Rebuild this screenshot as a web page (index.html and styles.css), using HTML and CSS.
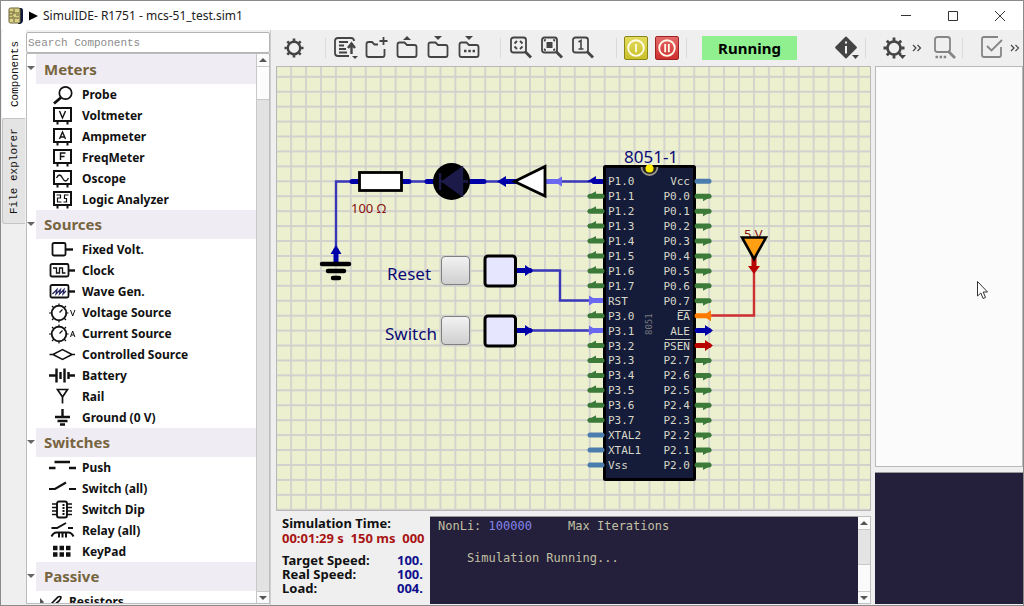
FILE: index.html
```html
<!DOCTYPE html>
<html lang="en">
<head>
<meta charset="utf-8">
<title>SimulIDE- R1751 - mcs-51_test.sim1</title>
<link rel="stylesheet" href="styles.css">
</head>
<body>
<div class="window">
  <header class="titlebar">
    <svg class="app-icon" width="16" height="18" viewBox="0 0 16 18"><path d="M10 1h3q2 0 2 3v9q0 3-3 4h-2z" fill="#111a3c"/><rect x="1" y="1" width="11" height="15" rx="1.500" fill="#d9cf86" stroke="#6a6236"/><path d="M1 5h4v3H1M1 11h4v-2M6 2v4h5M6 15v-4h5M8 8h3" fill="none" stroke="#6a6236"/></svg>
    <svg width="9" height="10" viewBox="0 0 9 10"><path d="M0 0.500L9 5L0 9.500z" fill="#000"/></svg>
    <h1 class="title">SimulIDE- R1751 - mcs-51_test.sim1</h1>
    <div class="window-buttons">
      <button aria-label="Minimize"><svg width="12" height="12" viewBox="0 0 12 12"><path d="M1 5.500h10"/></svg></button>
      <button aria-label="Maximize"><svg width="12" height="12" viewBox="0 0 12 12"><path d="M1.500 1.500h9v9h-9z"/></svg></button>
      <button aria-label="Close"><svg width="12" height="12" viewBox="0 0 12 12"><path d="M1 1l10 10M11 1L1 11"/></svg></button>
    </div>
  </header>

  <div class="workspace">
    <nav class="side-tabs">
      <button class="side-tab active">Components</button>
      <button class="side-tab">File explorer</button>
    </nav>

    <aside class="sidebar">
      <input class="search" type="text" placeholder="Search Components" aria-label="Search Components">
      <div class="tree-frame">
        <div class="tree">
          <section>
            <h2 class="category"><span>Meters</span></h2>
            <ul class="items">
              <li><svg class="ico" viewBox="0 0 28 20"><circle cx="17.500" cy="8" r="6.200" stroke-width="1.700"/><path d="M13 12.500L6 18.500" stroke-width="2.800"/></svg>Probe</li>
              <li><svg class="ico" viewBox="0 0 28 20"><path d="M6 2h17v13H6zM9.500 15v3.500M19.500 15v3.500"/><path d="M11.500 5l3 7 3-7" stroke-width="1.400"/></svg>Voltmeter</li>
              <li><svg class="ico" viewBox="0 0 28 20"><path d="M6 2h17v13H6zM9.500 15v3.500M19.500 15v3.500"/><path d="M11.500 12l3-7 3 7M12.500 10h4" stroke-width="1.400"/></svg>Ampmeter</li>
              <li><svg class="ico" viewBox="0 0 28 20"><path d="M6 2h17v13H6zM9.500 15v3.500M19.500 15v3.500"/><path d="M12.500 12V5h5M12.500 8.500h4" stroke-width="1.400"/></svg>FreqMeter</li>
              <li><svg class="ico" viewBox="0 0 28 20"><path d="M6 2h17v13H6zM9.500 15v3.500M19.500 15v3.500"/><path d="M8.500 9q3-6 6 0t6 0" stroke-width="1.300"/></svg>Oscope</li>
              <li><svg class="ico" viewBox="0 0 28 20"><path d="M6 2h17v13H6zM9.500 15v3.500M19.500 15v3.500"/><path d="M8.500 5h4v3h-3v4h4M15.500 12h3v-3.500h-2V5h4" stroke-width="1.200"/></svg>Logic Analyzer</li>
            </ul>
          </section>
          <section>
            <h2 class="category"><span>Sources</span></h2>
            <ul class="items">
              <li><svg class="ico" viewBox="0 0 28 20"><rect x="4.500" y="3" width="13" height="12.500" rx="1.500" stroke-width="1.800"/><path d="M18 9.500h7" stroke-width="2.400"/></svg>Fixed Volt.</li>
              <li><svg class="ico" viewBox="0 0 28 20"><rect x="2.500" y="3" width="18" height="12.500" rx="1.500" stroke-width="1.800"/><path d="M21 9.500h6" stroke-width="2.400"/><path d="M5 7h3.500v5h3V7h3v5h3" stroke-width="1.300"/></svg>Clock</li>
              <li><svg class="ico" viewBox="0 0 28 20"><rect x="2.500" y="3" width="18" height="12.500" rx="1.500" stroke-width="1.800"/><path d="M21 9.500h6" stroke-width="2.400"/><path d="M4.500 12l4.500-4.500-1 4.500 4.500-4.500-1 4.500 4.500-4.500-1 4.500 3-3" stroke="#22235c" stroke-width="1.200"/></svg>Wave Gen.</li>
              <li><svg class="ico" viewBox="0 0 28 20"><circle cx="11" cy="10" r="7.300" stroke-width="1.800"/><path d="M11 0.500v3M11 16.500v3M1 10h3M17.500 10h3M4 3l2 2M18 3l-2 2M4 17l2-2M18 17l-2-2M11.500 9.500l3-3" stroke-width="1.200"/><path d="M22.500 7l2.200 6 2.200-6" stroke-width="1"/></svg>Voltage Source</li>
              <li><svg class="ico" viewBox="0 0 28 20"><circle cx="11" cy="10" r="7.300" stroke-width="1.800"/><path d="M11 0.500v3M11 16.500v3M1 10h3M17.500 10h3M4 3l2 2M18 3l-2 2M4 17l2-2M18 17l-2-2M11.500 9.500l3-3" stroke-width="1.200"/><path d="M22.500 13l2.200-6 2.200 6M23.500 11h2.500" stroke-width="1"/></svg>Current Source</li>
              <li><svg class="ico" viewBox="0 0 28 20"><path d="M1.500 9.500H5L14.500 4.500L24 9.500h3M24 9.500L14.500 14.500L5 9.500" stroke-width="1.500"/></svg>Controlled Source</li>
              <li><svg class="ico" viewBox="0 0 28 20"><path d="M1 9.500h7M20 9.500h7" stroke-width="2.400"/><path d="M8.500 2.500v14M12.500 6v7M16.500 2.500v14M20.500 6v7" stroke-width="2.400"/></svg>Battery</li>
              <li><svg class="ico" viewBox="0 0 28 20"><path d="M9.500 2.500h10L14.500 10zM14.500 10v6.500" stroke-width="1.700"/></svg>Rail</li>
              <li><svg class="ico" viewBox="0 0 28 20"><path d="M14.500 1v8" stroke-width="2.400"/><path d="M7 9h15M9.500 13h10M12 16.500h5" stroke-width="2.600"/></svg>Ground (0 V)</li>
            </ul>
          </section>
          <section>
            <h2 class="category"><span>Switches</span></h2>
            <ul class="items">
              <li><svg class="ico" viewBox="0 0 28 20"><path d="M1 10h6.500M21 10h7M6.500 4h15.500" stroke-width="2.400"/></svg>Push</li>
              <li><svg class="ico" viewBox="0 0 28 20"><path d="M1 10h6L18 3.500M21 10h7" stroke-width="2.200"/></svg>Switch (all)</li>
              <li><svg class="ico" viewBox="0 0 28 20"><path d="M4 4h6M4 7.500h6M4 11h6M4 14.500h6M18 4h6M18 7.500h6M18 11h6M18 14.500h6" stroke-width="1.700"/><rect x="9" y="1.500" width="10" height="16" rx="2" stroke-width="1.900"/><path d="M15.500 4v11.500" stroke-dasharray="2 1" stroke-width="2"/></svg>Switch Dip</li>
              <li><svg class="ico" viewBox="0 0 28 20"><path d="M3.500 7H9L18 2M20 7h5" stroke-width="2"/><path d="M3.500 15.500q2-4 5-4h12q3 0 5 4M11 11.500v5M14.500 11.500v5M18 11.500v5" stroke-width="2"/></svg>Relay (all)</li>
              <li><svg class="ico" viewBox="0 0 28 20"><path d="M5 6h17.500M5 12.500h17.500" stroke-width="4.500" stroke-dasharray="4.500 2"/></svg>KeyPad</li>
            </ul>
          </section>
          <section>
            <h2 class="category"><span>Passive</span></h2>
            <ul class="items nested">
              <li><svg class="ico" viewBox="0 0 28 20"><path d="M1 6l4 4-4 4z" fill="#555" stroke="none"/><path d="M12 15q-1-2 1-4l6-6q2-1 3 0 0 2-2 4l-6 5q-2 1-3 1l-2 2" stroke-width="1.700"/></svg>Resistors</li>
            </ul>
          </section>
        </div>
        <div class="scrollbar tree-scroll">
          <span class="arrow up"></span>
          <span class="thumb"></span>
          <span class="arrow down"></span>
        </div>
      </div>
    </aside>

    <main class="center">
      <div class="toolbar">
        <button aria-label="Settings"><svg viewBox="0 0 24 24"><circle cx="12" cy="12" r="6.200" stroke-width="2.400"/><path d="M12 2.500v3M12 18.500v3M2.500 12h3M18.500 12h3M5.300 5.300l2 2M16.700 16.700l2 2M5.300 18.700l2-2M16.700 7.300l2-2" stroke-width="2.600"/></svg></button>
        <span class="sep"></span>
        <button aria-label="Recent circuits"><svg viewBox="0 0 24 24"><path d="M21 5q0-3-3-3H5Q2 2 2 5v12q0 3 3 3h11"/><path d="M6 6h9M6 9.500h5M6 13h7M6 16.500h8" stroke-width="2"/><path d="M18.500 18V9M15 12L18.500 7.500l3.500 4.500" stroke-width="2.400"/><path d="M19 20h6l-3 3z" fill="#444" stroke="none"/></svg></button>
        <button aria-label="New circuit"><svg viewBox="0 0 24 24"><path d="M14 8.500H10.500L8 6H4.500Q2.500 6 2.500 8v11q0 2 2 2h14q2 0 2-2v-6M19.500 1v8M15.500 5h8"/></svg></button>
        <button aria-label="Open circuit"><svg viewBox="0 0 24 24"><path d="M2.500 19V8.500q0-2 2-2h5L12 9h7.500q2 0 2 2v8q0 2-2 2h-15q-2 0-2-2z"/><path d="M8 4l4-4 4 4z" fill="#444" stroke="none"/></svg></button>
        <button aria-label="Save circuit"><svg viewBox="0 0 24 24"><path d="M2.500 19V8.500q0-2 2-2h5L12 9h7.500q2 0 2 2v8q0 2-2 2h-15q-2 0-2-2z"/><path d="M8 0h8l-4 4z" fill="#444" stroke="none"/></svg></button>
        <button aria-label="Save circuit as"><svg viewBox="0 0 24 24"><path d="M2.500 19V8.500q0-2 2-2h5L12 9h7.500q2 0 2 2v8q0 2-2 2h-15q-2 0-2-2z"/><path d="M8 0h8l-4 4z" fill="#444" stroke="none"/><path d="M7 15h11" stroke-width="2.500" stroke-dasharray="2.500 1.800"/></svg></button>
        <span class="sep"></span>
        <button class="zoom-first" aria-label="Zoom to fit"><svg viewBox="0 0 24 24"><rect x="2" y="1.500" width="15" height="15" rx="2.500"/><path d="M16 15.500l6 6" stroke-width="2.800"/><path d="M8 5L5.500 7.500M11 5L13.500 7.500M5.500 10.500L8 13M13.500 10.500L11 13"/></svg></button>
        <button aria-label="Zoom to selection"><svg viewBox="0 0 24 24"><rect x="2" y="1.500" width="15" height="15" rx="2.500"/><path d="M16 15.500l6 6" stroke-width="2.800"/><rect x="6.500" y="6" width="6" height="6" fill="#444" stroke="none"/><path d="M4.500 5.500V4H6M13 4h1.500V5.500M4.500 12.500v1.500H6M14.500 12.500v1.500H13" stroke-width="1.300"/></svg></button>
        <button aria-label="Zoom one to one"><svg viewBox="0 0 24 24"><rect x="2" y="1.500" width="15" height="15" rx="2.500"/><path d="M16 15.500l6 6" stroke-width="2.800"/><path d="M7.500 6l2.500-1.500v8.500M7.500 13h5" stroke-width="1.600"/></svg></button>
        <span class="sep wide"></span>
        <button class="run power" aria-label="Power circuit"><svg viewBox="0 0 24 24"><circle cx="12" cy="12" r="8.500"/><path d="M12 7.500v9"/></svg></button>
        <button class="run pause" aria-label="Pause simulation"><svg viewBox="0 0 24 24"><circle cx="12" cy="12" r="8.500"/><path d="M10 7.500v9M14 7.500v9"/></svg></button>
        <span class="sep narrow"></span>
        <output class="status">Running</output>
        <button class="info-btn" aria-label="Info"><svg viewBox="0 0 24 24"><path d="M12 1.500L22 11.500L12 21.500L2 11.500z" fill="#444" stroke-linejoin="round"/><path d="M12 10v7.500M12 5.500v2" stroke="#f4f4f4" stroke-width="2"/><path d="M18 19h7l-3.500 4z" fill="#444" stroke="none"/></svg></button>
        <span class="edge"></span>
      </div>

      <div class="canvas">
        <svg class="scene" width="100%" height="100%">
          <defs>
            <pattern id="grid" x="0" y="0" width="14.930" height="14.930" patternUnits="userSpaceOnUse" patternTransform="translate(335.900 181.300)">
              <path d="M0 0H14.930M0 14.930H14.930M0 0V14.930M14.930 0V14.930" stroke="#d1d1cd" stroke-width="1.800" fill="none"/>
            </pattern>
          </defs>
          <g transform="translate(-277 -67)">
            <rect x="277" y="67" width="4000" height="4000" fill="url(#grid)"/>
            <g class="wire">
              <path d="M336 248V181.500H352M402 181.500H436M480 181.500H514M554 181.500H590M528 270.500H560V300.500H590M528 330.500H590"/>
              <path class="hot" d="M711 315.500H754V268"/>
            </g>
            <g class="pin">
              <path d="M336 262V250M352 181.500H360M402 181.500H409M427 181.500H440M468 181.500H484M504 181.500H516M594 181.500H602M514 270.500H530M514 330.500H530"/>
              <path class="head" d="M336 245l5.500 9h-11zM497 181.500l9-5.500v11zM587 181.500l9-5.500v8zM533 270.500l-8-5.500v11zM533 330.500l-8-5.500v11z"/>
              <g class="input"><path d="M547 181.500H559M591 300.500H602M591 330.500H602"/><path class="head" d="M554 181.500l8-5v10zM597 300.500l-8-5v10zM597 330.500l-8-5v10z"/></g>
              <g class="high"><path d="M754 256V268"/><path class="head" d="M754 274l-6-8h12z"/></g>
            </g>
            <path d="M322 264H349M328 271H344M333 278H339" stroke="#000" stroke-width="4.500" stroke-linecap="round"/>
            <rect x="359.500" y="172.500" width="42" height="18" fill="#fff" stroke="#000" stroke-width="2.800"/>
            <circle cx="451.500" cy="181.500" r="18.500" fill="#000"/>
            <path d="M462 168V195L443 181.500zM440 173v17M440 181.500h28" fill="#1c1a48" stroke="#1c1a48" stroke-width="2.400"/>
            <path d="M545 166.500V196L514.500 181.500z" fill="#fff" stroke="#000" stroke-width="2.800"/>
            <rect x="485" y="256" width="30.500" height="30" rx="3" fill="#e6e6ff" stroke="#000" stroke-width="3"/>
            <rect x="485" y="316" width="30.500" height="30" rx="3" fill="#e6e6ff" stroke="#000" stroke-width="3"/>
            <text class="value" x="351" y="213">100 Ω</text>
            <text class="value" x="744" y="239">5 V</text>
            <path d="M742 237.500H766L754 259z" fill="#ffa014" stroke="#000" stroke-width="2.600"/>
            <text class="label" x="387" y="280">Reset</text>
            <text class="label" x="385" y="340">Switch</text>
            <text class="label" x="624" y="163">8051-1</text>
            <rect x="604.500" y="166.500" width="90" height="313" rx="1" fill="#141c3a" stroke="#000" stroke-width="3"/>
            <path d="M641.500 167a8 8 0 0 0 16 0" fill="#222" stroke="#9a968c" stroke-width="1.800"/>
            <circle cx="649.500" cy="168.500" r="4" fill="#ffee00"/>
            <g id="chip-pins"></g>
            <text class="chip-name" transform="translate(652 335) rotate(-90)">8051</text>
            <path d="M678 310.500H690.500M665 339.500H690.500" stroke="#c9c8bd" stroke-width="1"/>
          </g>
        </svg>
        <button class="push reset" aria-label="Reset"></button>
        <button class="push switch" aria-label="Switch"></button>
      </div>

      <div class="bottom">
        <section class="sim-info">
          <h3>Simulation Time:</h3>
          <p class="time">00:01:29 s  150 ms  000</p>
          <dl>
            <dt>Target Speed:</dt><dd>100.</dd>
            <dt>Real Speed:</dt><dd>100.</dd>
            <dt>Load:</dt><dd>004.</dd>
          </dl>
        </section>
        <div class="console">
          <p>NonLi: <b>100000</b>     Max Iterations</p>
          <p class="message">    Simulation Running...</p>
        </div>
        <div class="scrollbar console-scroll">
          <span class="arrow up"></span>
          <span class="thumb"></span>
          <span class="arrow down"></span>
        </div>
      </div>
    </main>

    <div class="editor">
      <div class="toolbar">
        <button aria-label="Editor settings"><svg viewBox="0 0 24 24"><circle cx="12" cy="12" r="6.500" stroke-width="2.600"/><path d="M12 1.500v4M12 18.500v4M1.500 12h4M18.500 12h4M4.800 4.800l2.500 2.500M17 17l2 2M4.800 19.200L7.300 16.700M16.700 7.300l2.500-2.500" stroke-width="2.800"/><path d="M17 19h7l-3.500 4z" fill="#444" stroke="none"/></svg></button>
        <button class="more" aria-label="More editor tools"><svg viewBox="0 0 10 8"><path d="M1 1l3 3-3 3M5.500 1l3 3-3 3" stroke-width="1.200"/></svg></button>
        <button class="dim find" aria-label="Find"><svg viewBox="0 0 24 24"><rect x="3" y="1" width="15" height="15" rx="2.500"/><path d="M16 15l7 7" stroke-width="2.800"/><path d="M3.500 21h11" stroke-width="2.500" stroke-dasharray="2.500 1.600"/></svg></button>
        <span class="edge"></span>
        <button class="dim compile" aria-label="Compile"><svg viewBox="0 0 24 24"><path d="M21 11v8q0 2-2 2H4q-2 0-2-2V3q0-2 2-2h14"/><path d="M7 10l4.500 4.500L22 4"/></svg></button>
        <button class="more" aria-label="More compiler tools"><svg viewBox="0 0 10 8"><path d="M1 1l3 3-3 3M5.500 1l3 3-3 3" stroke-width="1.200"/></svg></button>
      </div>
      <div class="editor-pane">
        <svg class="cursor" width="13" height="20" viewBox="0 0 13 20"><path d="M1.500 1.500V16l3.300-3 2.300 5.500 2.400-1L7.200 12h4.300z" fill="#fff" stroke="#333"/></svg>
      </div>
      <div class="editor-console"></div>
    </div>
  </div>
</div>
<script src="chip.js"></script>
</body>
</html>
```
FILE: chip.js
```js
// Draws the 8051's two pin columns: [label, kind]
const left = [['P1.0', 'none'], ['P1.1'], ['P1.2'], ['P1.3'], ['P1.4'], ['P1.5'], ['P1.6'], ['P1.7'],
  ['RST', 'none'], ['P3.0'], ['P3.1', 'none'], ['P3.2'], ['P3.3'], ['P3.4'], ['P3.5'], ['P3.6'], ['P3.7'],
  ['XTAL2', 'idle'], ['XTAL1', 'idle'], ['Vss', 'idle']];
const right = [['Vcc', 'idle'], ['P0.0'], ['P0.1'], ['P0.2'], ['P0.3'], ['P0.4'], ['P0.5'], ['P0.6'], ['P0.7'],
  ['EA', 'input-high'], ['ALE', 'low'], ['PSEN', 'high'], ['P2.7'], ['P2.6'], ['P2.5'], ['P2.4'], ['P2.3'],
  ['P2.2'], ['P2.1'], ['P2.0']];
const colors = { open: '#3c7a3a', low: '#0000a8', idle: '#4a7cae', high: '#b80000', 'input-high': '#ff7a00' };
const TOP = 181.3, PITCH = 14.93;
let out = '';

function pin(label, kind, y, side) {
  const isLeft = side === 'left';
  const color = colors[kind];
  if (color) {
    const x1 = isLeft ? 602 : 697, x2 = isLeft ? 590 : 709;
    out += `<path d="M${x1} ${y}H${x2}" stroke="${color}" stroke-width="5" stroke-linecap="round"/>`;
    let head = '';
    if (kind === 'open') head = isLeft ? `M587 ${y}l9-5v5z` : `M712 ${y}l-9 5v-5z`;
    if (kind === 'low' || kind === 'high') head = `M713 ${y}l-8-5.500v11z`;
    if (kind === 'input-high') head = `M703 ${y}l8-5.500v11z`;
    if (head) out += `<path d="${head}" fill="${color}"/>`;
  }
  const x = isLeft ? 608 : 690;
  out += `<text class="pin-label ${side}" x="${x}" y="${Math.round(y + 4)}">${label}</text>`;
}

left.forEach(([label, kind = 'open'], i) => pin(label, kind, TOP + i * PITCH, 'left'));
right.forEach(([label, kind = 'open'], i) => pin(label, kind, TOP + i * PITCH, 'right'));
document.getElementById('chip-pins').innerHTML = out;
```
FILE: styles.css
```css
* { box-sizing: border-box; }

html, body { height: 100%; margin: 0; }

body {
  font-family: "Noto Sans", "Open Sans", sans-serif;
  font-size: 12px;
  color: #111;
}

button {
  border: 0;
  padding: 0;
  background: none;
  font: inherit;
  color: inherit;
}

h1, h2, h3, p, ul, dl, dd { margin: 0; padding: 0; }

.window {
  display: flex;
  flex-direction: column;
  height: 100vh;
  border: 1px solid #8a8a8c;
  background: #efefef;
  overflow: hidden;
}

/* Title bar */
.titlebar {
  display: flex;
  align-items: center;
  flex: none;
  height: 29px;
  padding-left: 7px;
  background: #fff;
}

.app-icon { margin-right: 5px; }

.title {
  margin-left: 5px;
  font-size: 12px;
  font-weight: 400;
  color: #222;
}

.window-buttons { display: flex; margin-left: auto; }

.window-buttons button {
  display: grid;
  place-items: center;
  width: 47px;
  height: 28px;
}

.window-buttons svg { fill: none; stroke: #333; stroke-width: 1; }

.workspace { display: flex; flex: 1; min-height: 0; }

/* Vertical tabs */
.side-tabs {
  display: flex;
  flex-direction: column;
  flex: none;
  width: 25px;
  padding-left: 1px;
}

.side-tab {
  writing-mode: vertical-rl;
  transform: rotate(180deg);
  width: 23px;
  height: 106px;
  border: 1px solid #c4c4c4;
  border-left: 0;
  border-radius: 0 3px 3px 0;
  background: #e4e4e4;
  font: 11px "Liberation Mono", monospace;
  text-align: center;
}

.side-tab.active { height: 88px; width: 24px; border-color: #fff; background: #fff; }

/* Component tree */
.sidebar {
  display: flex;
  flex-direction: column;
  flex: none;
  width: 245px;
  padding: 2px 0 1px;
  border-right: 1px solid #cfcfcf;
}

.search {
  flex: none;
  height: 21px;
  padding: 0 1px;
  border: 1px solid #b4b4b4;
  border-radius: 2px;
  background: #fff;
  font: 11px "Liberation Mono", monospace;
}

.search::placeholder { color: #8c8c8c; opacity: 1; }

.tree-frame {
  display: flex;
  flex: 1;
  min-height: 0;
  border: 1px solid #bdbdbd;
  background: #fff;
}

.tree { flex: 1; min-width: 0; overflow: hidden; }

.category {
  position: relative;
  margin-left: 9px;
  padding-left: 8px;
  height: 30px;
  background: #f0ecf4;
  font-size: 15px;
  line-height: 30px;
  font-weight: 700;
  color: #77653f;
}

.category::before {
  content: "";
  position: absolute;
  left: -9px;
  top: 12px;
  border: 4px solid transparent;
  border-top-color: #666;
  border-bottom: 0;
}

.items { list-style: none; }

.items li {
  display: flex;
  align-items: center;
  gap: 6px;
  height: 21px;
  padding-left: 21px;
  font-weight: 700;
}

section:not(:first-child) .category { height: 29px; line-height: 28px; }

.items.nested li { gap: 2px; padding-left: 12px; }

.ico { flex: none; width: 28px; height: 20px; fill: none; stroke: #111; stroke-width: 2px; }

/* Scrollbars */
.scrollbar {
  display: flex;
  flex-direction: column;
  flex: none;
  width: 13px;
  border-left: 1px solid #c8c8c8;
  background: #e2e2e2;
}

.arrow {
  display: grid;
  place-items: center;
  flex: none;
  height: 12px;
  background: #fbfbfb;
}

.arrow::before { content: ""; border: 4px solid transparent; }
.arrow.up::before { border-bottom-color: #555; border-top: 0; }
.arrow.down::before { border-top-color: #555; border-bottom: 0; }
.arrow.down { margin-top: auto; border-top: 1px solid #c8c8c8; }

.thumb { border: solid #c8c8c8; border-width: 1px 0; background: #fcfcfc; }
.tree-scroll .thumb { height: 34px; }

/* Toolbars */
.toolbar {
  display: flex;
  align-items: center;
  gap: 7px;
  flex: none;
  height: 36px;
}

.toolbar button { flex: none; width: 24px; height: 24px; }

.toolbar svg {
  display: block;
  width: 100%;
  height: 100%;
  fill: none;
  stroke: #444;
  stroke-width: 1.8px;
  overflow: visible;
}

.sep { flex: none; width: 13px; height: 20px; border-right: 1px solid #dadada; }
.sep.wide { width: 15px; }
.sep.narrow { width: 1px; margin-right: 8px; }
.edge { flex: none; width: 1px; height: 20px; background: #dadada; }
.toolbar .zoom-first { margin-left: 1px; }

.toolbar .run { border: 1px solid #8b861c; border-radius: 2px; background: linear-gradient(#e2dc5c, #c9c02a); }
.toolbar .run.pause { border-color: #9c2222; background: linear-gradient(#e46a6a, #cf2e2e); }
.toolbar .run svg { stroke: #fffbe8; stroke-width: 2px; }

.status {
  width: 95px;
  background: #90f090;
  font-size: 15px;
  font-weight: 700;
  line-height: 24px;
  text-align: center;
  color: #000;
}

.info-btn { margin-left: auto; }

/* Circuit area */
.center {
  display: flex;
  flex-direction: column;
  flex: 1;
  min-width: 0;
  padding-left: 5px;
}

.center .toolbar { padding: 0 5px 0 6px; }

.canvas {
  position: relative;
  flex: 1;
  min-height: 0;
  border: 1px solid #b9b9b9;
  background: #edf0cf;
  overflow: hidden;
}

.scene { display: block; }

.wire { fill: none; stroke: #3a38b8; stroke-width: 2.4px; }
.wire .hot { stroke: #cc3030; }
.pin { fill: none; stroke: #0000a8; stroke-width: 5px; stroke-linecap: round; }
.pin .head { fill: #0000a8; stroke: none; }
.pin .input { stroke: #6a68f0; }
.pin .input .head { fill: #6a68f0; }
.pin .high { stroke: #b80000; }
.pin .high .head { fill: #b80000; }

.label { font-size: 17px; fill: #0a0a78; }
.value { font-size: 13px; fill: #861010; }
.pin-label { font: 11px "DejaVu Sans Mono", monospace; fill: #d9d8c8; }
.pin-label.right { text-anchor: end; }
.chip-name { font: 9px "DejaVu Sans Mono", monospace; fill: #77787c; }

.push {
  position: absolute;
  left: 164px;
  width: 29px;
  height: 29px;
  border: 1px solid #808080;
  border-radius: 4px;
  background: linear-gradient(#f2f2f2, #cfcfcf);
}

.push.reset { top: 189px; }
.push.switch { top: 249px; }

/* Simulation info and console */
.bottom { display: flex; flex: none; height: 94px; padding: 5px 0 1px; }

.sim-info {
  flex: none;
  width: 150px;
  margin-right: 4px;
  padding-left: 6px;
  overflow: hidden;
  font-size: 13px;
  font-weight: 700;
  line-height: 14px;
}

.sim-info h3 { font-size: 13px; line-height: 15px; }
.time { color: #a81414; white-space: pre; }

.sim-info dl {
  display: grid;
  grid-template-columns: 115px 28px;
  margin-top: 8px;
}

.sim-info dd { color: #10108c; }

.console {
  flex: 1;
  min-width: 0;
  padding: 1px 8px;
  border-top: 1px solid #999;
  background: #241f3a;
  font: 12px/16px "DejaVu Sans Mono", monospace;
  color: #c2c0a4;
  white-space: pre;
  overflow: hidden;
}

.console { display: flex; flex-direction: column; gap: 16px; }
.console b { font-weight: 400; color: #8484ec; }

.console-scroll { border: 1px solid #c0c0c0; border-left: 0; background: #fafafa; }
.console-scroll .thumb { height: 36px; background: #e4e4e4; }

/* Editor column */
.editor {
  display: flex;
  flex-direction: column;
  flex: none;
  width: 152px;
  padding: 0 0 1px 4px;
}

.editor .toolbar { gap: 6px; padding-left: 7px; }
.toolbar .more { width: 10px; height: 8px; }
.editor .dim svg { stroke: #858585; }
.editor .find { margin-left: 4px; }
.editor .compile { margin-left: 11px; }

.editor-pane {
  position: relative;
  flex: 1;
  border: 1px solid #b9b9b9;
  background: #fbfbfb;
}

.cursor { position: absolute; left: 100px; top: 213px; }

.editor-console {
  flex: none;
  height: 132px;
  margin-top: 5px;
  border-top: 1px solid #999;
  background: #241f3a;
}
```
